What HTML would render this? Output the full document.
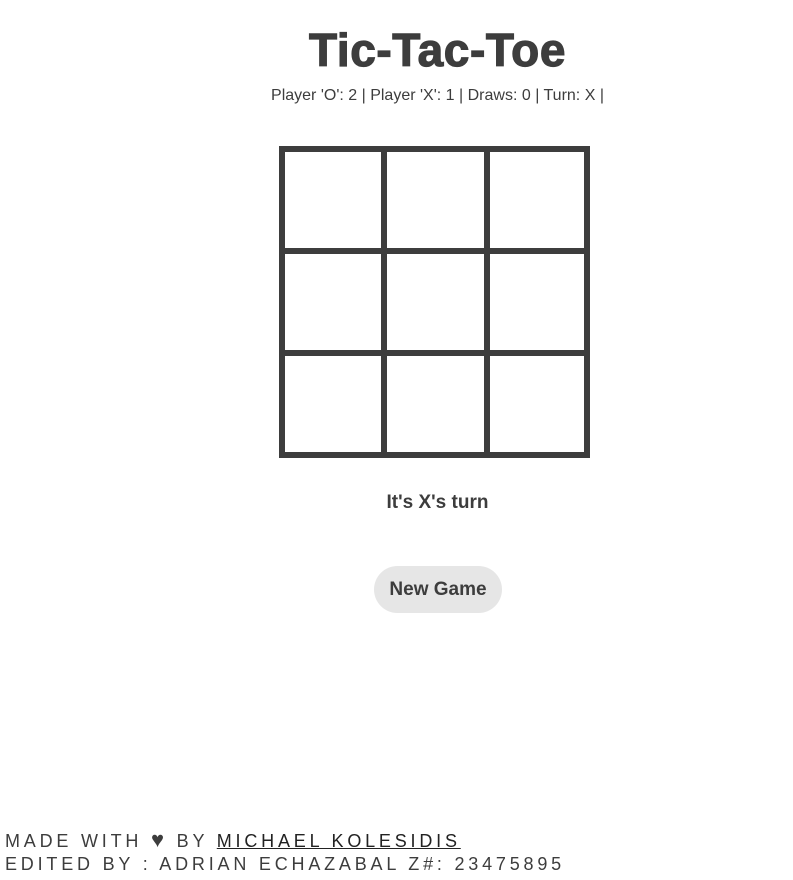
<!DOCTYPE html>
<html><head><style>
body{margin:0;width:793px;height:880px;background:#fff;font-family:"Liberation Sans",sans-serif;color:#3d3d3d;position:relative;overflow:hidden}
.t{position:absolute;left:0;width:875px;text-align:center}
h1{position:absolute;left:0;width:875px;text-align:center;margin:0;top:24px;font-size:46px;font-weight:bold;line-height:52px;-webkit-text-stroke:1.2px #3d3d3d;letter-spacing:0.6px}
.b{position:absolute;background:#3d3d3d}
.btn{position:absolute;left:374px;top:566px;width:128px;height:47px;border-radius:24px;background:#e6e6e6;font-weight:bold;font-size:19px;line-height:47px;text-align:center}
.f{position:absolute;left:5px;font-size:18px;letter-spacing:3.8px;line-height:22px}
</style></head><body>
<h1>Tic-Tac-Toe</h1>
<div class="t" style="top:87px;font-size:16px">Player 'O': 2 | Player 'X': 1 | Draws: 0 | Turn: X |</div>
<div class="b" style="left:279px;top:146px;width:311px;height:6px"></div>
<div class="b" style="left:279px;top:452px;width:311px;height:6px"></div>
<div class="b" style="left:279px;top:146px;width:6px;height:312px"></div>
<div class="b" style="left:584px;top:146px;width:6px;height:312px"></div>
<div class="b" style="left:381px;top:146px;width:6px;height:312px"></div>
<div class="b" style="left:484px;top:146px;width:6px;height:312px"></div>
<div class="b" style="left:279px;top:248px;width:311px;height:6px"></div>
<div class="b" style="left:279px;top:350px;width:311px;height:6px"></div>
<div class="t" style="top:492px;font-size:19px;font-weight:bold">It's X's turn</div>
<div class="btn">New Game</div>
<div class="f" style="top:829px">MADE WITH <span style="font-size:22px">♥</span> BY <span style="text-decoration:underline;color:#222">MICHAEL KOLESIDIS</span></div>
<div class="f" style="top:853px">EDITED BY : ADRIAN ECHAZABAL Z#: 23475895</div>
</body></html>
